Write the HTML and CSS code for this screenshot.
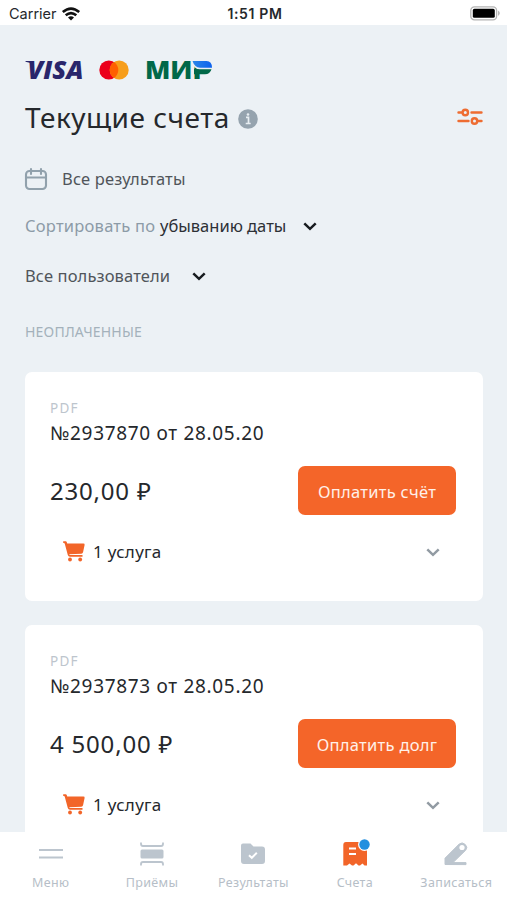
FILE: index.html
```html
<!DOCTYPE html>
<html lang="ru">
<head>
<meta charset="utf-8">
<meta name="viewport" content="width=device-width, initial-scale=1">
<title>Текущие счета</title>
<link rel="stylesheet" href="styles.css">
</head>
<body>
<div class="app">
  <header class="status">
    <div class="status-left"><span class="carrier">Carrier</span>
      <svg class="wifi" width="18" height="14" viewBox="0 0 18 14"><g fill="none" stroke="#111" stroke-width="2.6"><path d="M.8 5.100Q9-1.900 17.200 5.100"/><path d="M3.700 8.300Q9 3.800 14.300 8.300"/></g><path d="M6 10.400Q9 8 12 10.400L9 13.600Z" fill="#111"/></svg>
    </div>
    <span class="clock">1:51 PM</span>
    <svg class="battery" width="31" height="15" viewBox="0 0 31 15"><rect x=".8" y=".8" width="25.800" height="13" rx="3.600" fill="#fff" stroke="#b4b4b4" stroke-width="1.300"/><rect x="2.800" y="2.800" width="22" height="9" rx="1.600" fill="#000"/><path d="M28.200 4.600q3 2.700 0 5.400z" fill="#aaa"/></svg>
  </header>
  <main class="content">
    <div class="brands">
      <svg class="visa" width="74" height="20" viewBox="0 0 74 20"><text class="logo-text visa-text" x="2.500" y="18.500" textLength="56" lengthAdjust="spacingAndGlyphs">VISA</text><path d="M.5 1H7l1 4Q5 2.300.5 1.800z" fill="#29266b"/></svg>
      <svg class="mastercard" width="30" height="20" viewBox="0 0 30 20"><circle cx="9.800" cy="10" r="9.500" fill="#eb001b"/><circle cx="20.200" cy="10" r="9.500" fill="#f79e1b"/><path d="M15 2.050a9.500 9.500 0 0 1 0 15.900a9.500 9.500 0 0 1 0-15.900z" fill="#ff5f00"/></svg>
      <svg class="mir" width="67" height="20" viewBox="0 0 67 20"><defs><linearGradient id="wing"><stop offset="0" stop-color="#2a86e8"/><stop offset="1" stop-color="#0d62ee"/></linearGradient></defs><text class="logo-text" x="-1" y="18.500" textLength="64" lengthAdjust="spacingAndGlyphs">МИР</text><path d="M46 0h21v10H53Q48 8 46 3z" fill="#ecf1f5"/><path d="M48 8.500q3 .8 6 .8h11.500q-1.500 5-6.500 5H48z" fill="#006848"/><path d="M46.500 1h14q5.500 0 5.500 6.800H54q-5.500-.5-7.500-6.800z" fill="url(#wing)"/></svg>
    </div>
    <div class="title-row">
      <h1 class="title">Текущие счета</h1>
      <svg class="info" width="20" height="20" viewBox="0 0 20 20"><circle cx="10" cy="10" r="9.800" fill="#95a3ae"/><path d="M8 8.400h2.500v6M7.700 14.500h5" fill="none" stroke="#e8eef2" stroke-width="1.700"/><circle cx="10" cy="5.500" r="1.300" fill="#e8eef2"/></svg>
      <svg class="filter" width="26" height="18" viewBox="0 0 26 18"><g fill="none" stroke="#ee6c31" stroke-width="2.400" stroke-linecap="round"><path d="M1.500 4.500h3M14.500 4.500h10M1.500 13h10M21 13h3.500"/><circle cx="8.300" cy="4.500" r="2.700"/><circle cx="17.500" cy="13" r="2.700"/></g></svg>
    </div>
    <div class="period">
      <svg class="calendar" width="22" height="22" viewBox="0 0 22 22"><g fill="none" stroke="#91a1ac" stroke-width="2.100" stroke-linecap="round"><rect x="1" y="3" width="20" height="18" rx="3.500"/><path d="M1 9.500h20M6 1v5M16 1v5"/></g></svg>
      <span class="period-text">Все результаты</span>
    </div>
    <div class="sort"><span class="sort-label">Сортировать по</span><span class="sort-value">убыванию даты</span><svg class="chev" width="14" height="9" viewBox="0 0 14 9"><path d="M1.300 1.300L7 6.800l5.700-5.500"/></svg></div>
    <div class="users"><span class="users-text">Все пользователи</span><svg class="chev" width="14" height="9" viewBox="0 0 14 9"><path d="M1.300 1.300L7 6.800l5.700-5.500"/></svg></div>
    <h2 class="section">НЕОПЛАЧЕННЫЕ</h2>
    <article class="card">
      <div class="pdf">PDF</div>
      <div class="number">№2937870 от 28.05.20</div>
      <div class="pay"><span class="amount">230,00 ₽</span><button class="button">Оплатить счёт</button></div>
      <div class="service">
        <svg class="cart" width="22" height="21" viewBox="0 0 22 21"><path d="M.2.3h2.500q.800 0 1 .800l.500 1.400h16.200q1.500 0 1.200 1.400l-1.500 7.100q-.300 1.500-1.800 1.700l-12 .500q.100.900 1 .900h12.200v1.600H7q-1.700 0-2.200-1.700L1.700 2.600Q1.500 2 .900 1.900H.2z" fill="#f26529"/><circle cx="7" cy="18.500" r="1.900" fill="#f26529"/><circle cx="17.200" cy="18.500" r="1.900" fill="#f26529"/></svg>
        <span class="service-text">1 услуга</span><svg class="chev muted" width="14" height="9" viewBox="0 0 14 9"><path d="M1.300 1.300L7 6.800l5.700-5.500"/></svg>
      </div>
    </article>
    <article class="card">
      <div class="pdf">PDF</div>
      <div class="number">№2937873 от 28.05.20</div>
      <div class="pay"><span class="amount">4 500,00 ₽</span><button class="button">Оплатить долг</button></div>
      <div class="service">
        <svg class="cart" width="22" height="21" viewBox="0 0 22 21"><path d="M.2.3h2.500q.800 0 1 .800l.500 1.400h16.200q1.500 0 1.200 1.400l-1.500 7.100q-.300 1.500-1.800 1.700l-12 .500q.100.900 1 .900h12.200v1.600H7q-1.700 0-2.200-1.700L1.700 2.600Q1.500 2 .900 1.900H.2z" fill="#f26529"/><circle cx="7" cy="18.500" r="1.900" fill="#f26529"/><circle cx="17.200" cy="18.500" r="1.900" fill="#f26529"/></svg>
        <span class="service-text">1 услуга</span><svg class="chev muted" width="14" height="9" viewBox="0 0 14 9"><path d="M1.300 1.300L7 6.800l5.700-5.500"/></svg>
      </div>
    </article>
  </main>
  <nav class="tabs">
    <a class="tab"><svg width="28" height="28" viewBox="0 0 28 28"><path d="M2 10h24M2 17.500h24" stroke="#bcc5ce" stroke-width="2"/></svg><span>Меню</span></a>
    <a class="tab"><svg width="28" height="28" viewBox="0 0 28 28"><path d="M3 2.500v1.500q0 2 2 2h18q2 0 2-2V2.500M3 25.500V24q0-2 2-2h18q2 0 2 2v1.500" fill="none" stroke="#bcc5ce" stroke-width="1.800"/><rect x="2.500" y="9.500" width="23" height="9" rx="1.500" fill="#bcc5ce"/></svg><span>Приёмы</span></a>
    <a class="tab"><svg width="28" height="28" viewBox="0 0 28 28"><path d="M4 3.500h7.500l3 3H23q3 0 3 3V21q0 3-3 3H5q-3 0-3-3V5.500q0-2 2-2z" fill="#bcc5ce"/><path d="M10 15.200l2.800 2.600 5-5" fill="none" stroke="#fff" stroke-width="2"/></svg><span>Результаты</span></a>
    <a class="tab"><svg width="28" height="28" viewBox="0 0 28 28"><path d="M5 2h18q3 0 3 3v20.500h-2.500l-2-2-2.500 2h-1.500l-2.500-2.300-2.500 2.300H11l-2.500-2-2.500 2H2.300V5Q2.300 2 5 2z" fill="#f26529"/><path d="M8 8.500h7M8 14h7" stroke="#fff" stroke-width="2.200"/><circle cx="23.500" cy="4.500" r="6.500" fill="#fff"/><circle cx="23.500" cy="4.500" r="5.200" fill="#238fdf"/></svg><span>Счета</span></a>
    <a class="tab"><svg width="28" height="28" viewBox="0 0 28 28"><path d="M3 24.500v-6.300L17.200 4q3-2.400 6 .4t.5 5.800L11 22.600h13v2z" fill="#bcc5ce" stroke="#bcc5ce"/><circle cx="20" cy="7.500" r="2.600" fill="#fff"/></svg><span>Записаться</span></a>
  </nav>
</div>
</body>
</html>
```

FILE: styles.css
```css
* { box-sizing: border-box; }
body { margin: 0; background: #ecf1f5; font-family: "Noto Sans", sans-serif; color: #25282c; }
svg { display: block; flex: none; overflow: visible; }
.app { height: 900px; display: flex; flex-direction: column; overflow: hidden; }
.status { height: 25px; flex: none; background: #fff; display: grid; grid-template-columns: 1fr auto 1fr; align-items: center; padding: 2px 6px 0 9px; font: 15px/22px Inter, sans-serif; }
.status-left { display: flex; align-items: center; gap: 5px; }
.carrier { font-size: 14.5px; }
.clock { font-weight: 600; font-size: 14px; letter-spacing: .65px; }
.battery { justify-self: end; }
.content { flex: 1; min-height: 0; overflow: hidden; padding: 34px 24px 0 25px; }
.brands { height: 21px; display: flex; align-items: center; }
.logo-text { font: 800 24.5px "Open Sans", sans-serif; fill: #006848; }
.visa-text { font-style: italic; fill: #29266b; }
.mir { margin-left: 17px; }
.title-row { display: flex; align-items: center; height: 36px; margin-top: 20px; }
.title { margin: -2px 0 0; font-size: 28px; font-weight: 400; line-height: 36px; white-space: nowrap; width: 204px; letter-spacing: .5px; }
.info { margin: 2px 0 0 9px; }
.filter { margin-left: auto; margin-top: -2px; }
.period { display: flex; align-items: center; height: 24px; margin-top: 31px; gap: 15px; }
.period-text, .sort, .users-text { font-size: 16.5px; line-height: 24px; color: #50555a; white-space: nowrap; letter-spacing: .17px; }
.period-text { margin-top: -1px; }
.sort { display: flex; align-items: center; height: 24px; margin-top: 23px; }
.sort-label { color: #8c9ba7; width: 135px; letter-spacing: .23px; }
.sort-value { width: 143px; color: #2c3035; letter-spacing: 0; }
.users { display: flex; align-items: center; height: 24px; margin-top: 26px; }
.users-text { width: 167px; letter-spacing: .12px; }
.chev { fill: none; stroke: #171b1f; stroke-width: 2.5; }
.muted { stroke: #929ba3; }
.section { margin: 34px 0 0; font-size: 14px; font-weight: 400; line-height: 20px; color: #a4b1bb; letter-spacing: .2px; }
.card { height: 229px; margin-top: 30px; padding: 26px 27px 0 25px; background: #fff; border-radius: 7px; }
.card + .card { margin-top: 24px; }
.pdf { font-size: 13.5px; line-height: 20px; letter-spacing: 1.3px; color: #bdc5cd; }
.number { font-size: 19px; line-height: 28px; white-space: nowrap; letter-spacing: .68px; margin-top: 1px; }
.pay { display: flex; align-items: center; justify-content: space-between; margin-top: 19px; }
.amount { font-size: 24px; white-space: nowrap; letter-spacing: .8px; }
.button { width: 158px; height: 49px; border: 0; border-radius: 7px; background: #f46529; color: #fff0e8; font: 16.5px "Noto Sans", sans-serif; letter-spacing: .28px; padding: 1px 0 0; white-space: nowrap; }
.service { display: flex; align-items: center; height: 24px; margin-top: 25px; padding: 0 16px 0 13px; font-size: 17px; letter-spacing: .3px; }
.service-text { margin: -1px 0 0 8px; }
.service .cart { margin-top: -1px; }
.service .chev { margin-left: auto; }
.tabs { height: 68px; flex: none; background: #fff; display: grid; grid-template-columns: repeat(5, 1fr); padding-top: 8px; }
.tab { display: flex; flex-direction: column; align-items: center; font-size: 12.5px; line-height: 18px; color: #b6bec7; letter-spacing: .35px; }
.tab span { margin-top: 6px; }
```
